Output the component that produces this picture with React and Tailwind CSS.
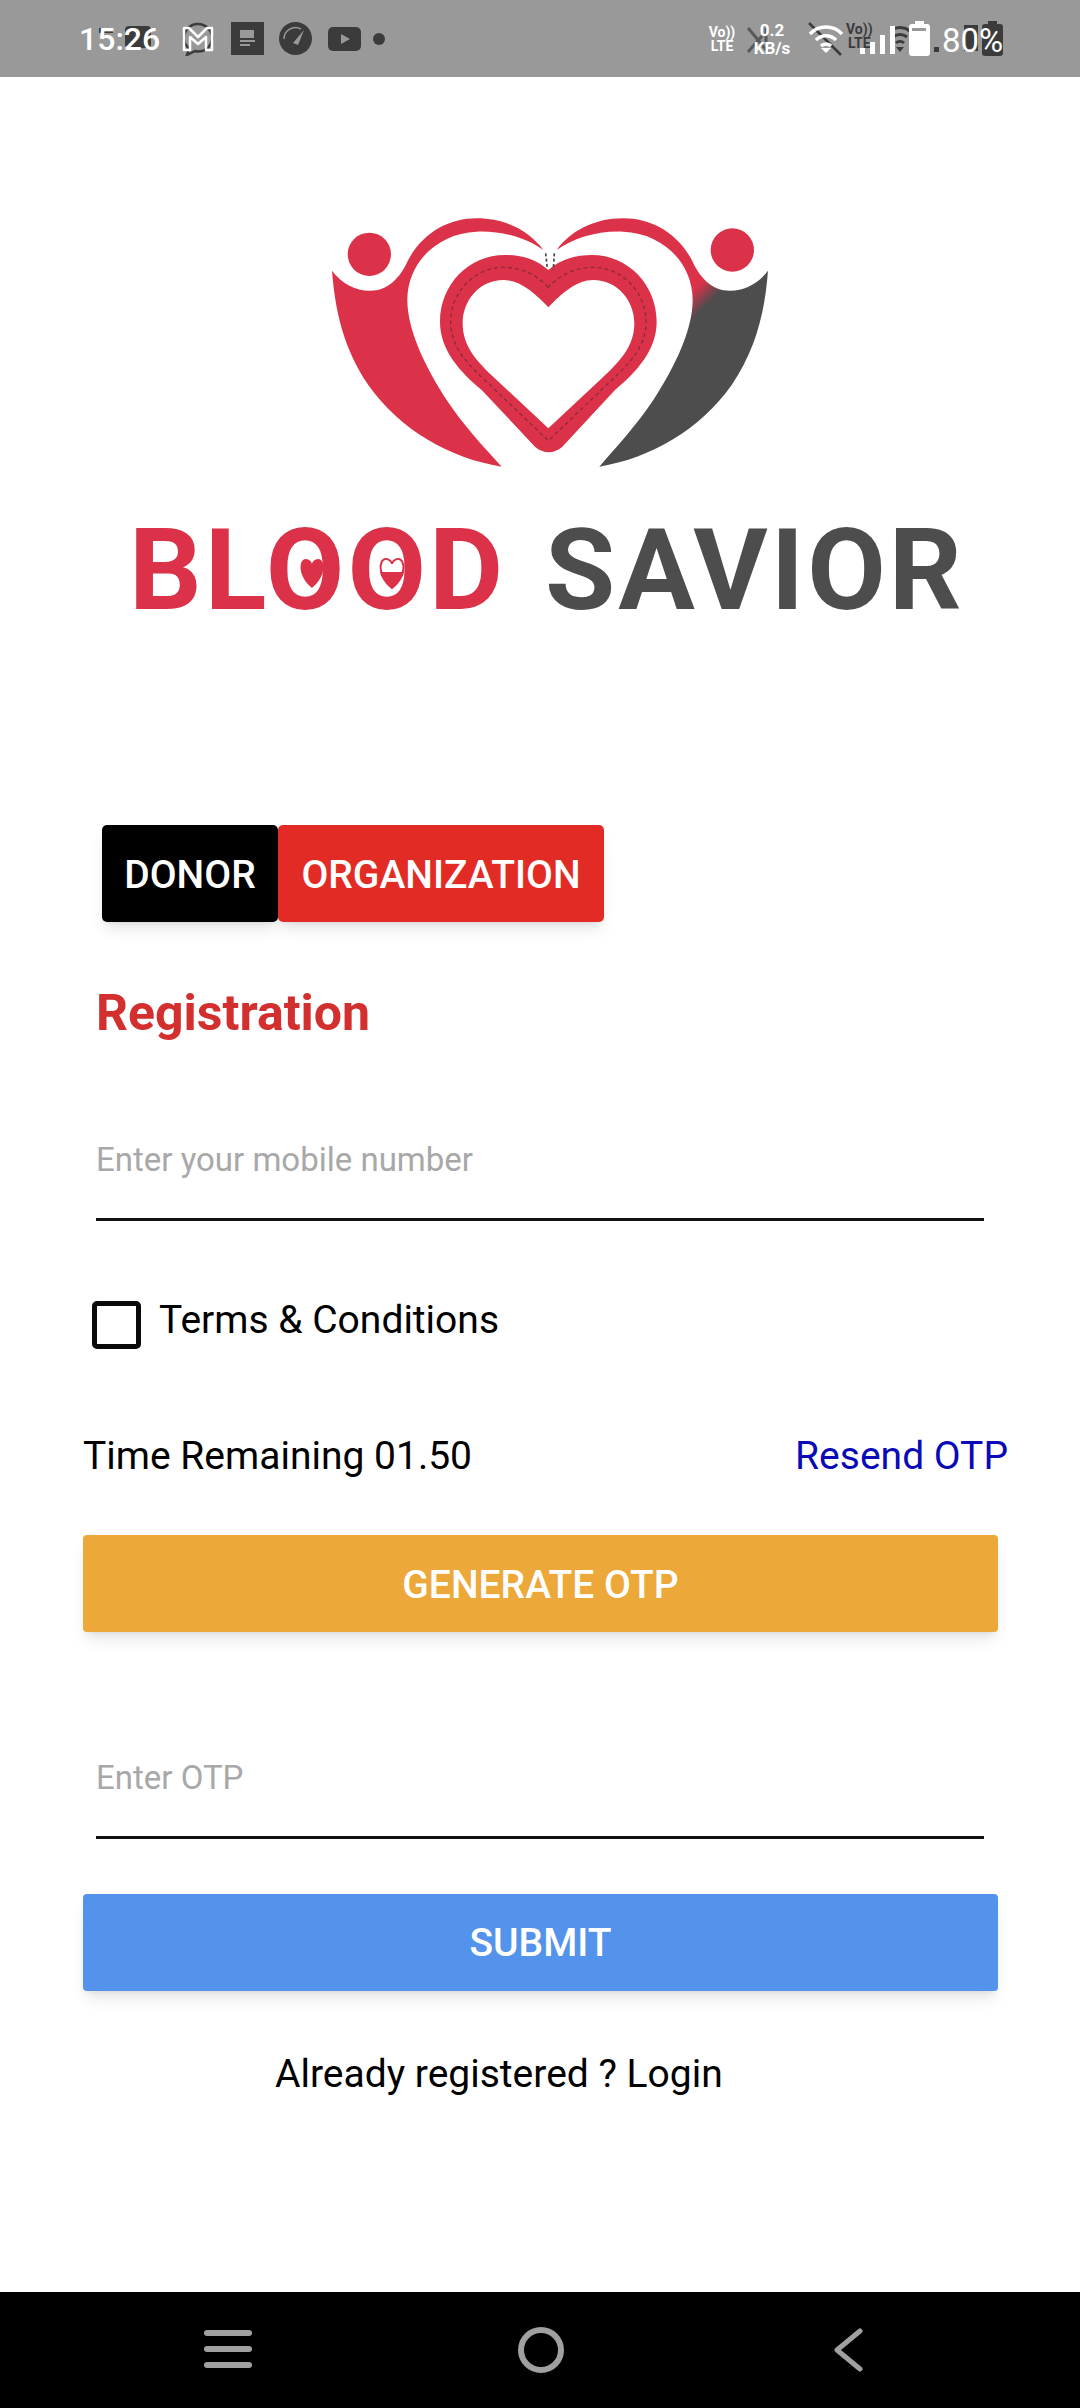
import React from "react";

function Logo() {
  return (
    <div className="relative">
      <svg viewBox="300 190 500 290" width="500" height="290" className="block ml-[300px]">
        <defs>
          <linearGradient id="rg" gradientUnits="userSpaceOnUse" x1="1185" y1="295" x2="1228" y2="338">
            <stop offset="0" stopColor="#dc3249" />
            <stop offset="1" stopColor="#4d4d4d" />
          </linearGradient>
        </defs>
        <g transform="translate(300 190) scale(0.33333)">
          <circle cx="208" cy="193" r="65" fill="#dc3249" />
          <circle cx="1297" cy="180" r="65" fill="#dc3249" />
          <path
            fill="#dc3249"
            d="M96 242C125 280 165 302 210 302C265 302 300 262 322 215C365 130 445 85 530 85C620 85 690 125 730 180C680 145 610 122 530 125C410 130 322 220 322 330C322 420 375 530 440 630C490 705 550 770 605 830C450 805 300 720 205 585C130 475 105 360 96 242Z"
          />
          <path
            fill="url(#rg)"
            d="M1404 242C1375 280 1335 302 1290 302C1235 302 1200 262 1178 215C1135 130 1055 85 970 85C880 85 810 125 770 180C820 145 890 122 970 125C1090 130 1178 220 1178 330C1178 420 1125 530 1060 630C1010 705 950 770 898 830C1050 805 1200 720 1295 585C1370 475 1395 360 1404 242Z"
          />
          <path
            fill="#dc3249"
            fillRule="evenodd"
            d="M745 240C705 205 660 195 615 195C505 195 420 285 420 395C420 480 480 545 545 600L705 770C730 792 762 792 787 770L945 600C1010 545 1070 480 1070 395C1070 285 985 195 875 195C830 195 785 205 745 240ZM745 352C705 310 660 270 610 270C540 270 488 330 488 400C488 470 530 515 590 570L745 715L900 570C960 515 1003 470 1003 400C1003 330 950 270 880 270C830 270 785 310 745 352Z"
          />
          <path
            fill="none"
            stroke="#8f2a3a"
            strokeWidth="4"
            strokeDasharray="12 9"
            d="M745 292C705 250 660 232 612 232C525 232 452 305 452 395C452 470 500 520 565 580L745 752L925 580C990 520 1038 470 1038 395C1038 305 965 232 878 232C830 232 785 250 745 292Z"
          />
          <path fill="none" stroke="#444" strokeWidth="5" strokeDasharray="9 7" d="M737 190L742 235M763 190L760 240" />
        </g>
      </svg>
      <div className="relative mt-[33px] ml-[129px] h-[114px] flex text-[114px] leading-[114px] font-bold whitespace-nowrap">
        <span className="tracking-[3px] text-[#dc3249]">BLOOD</span>
        <span className="absolute left-[416px] tracking-[3px] text-[#4d4d4d]">SAVIOR</span>
        <svg viewBox="0 0 110 40" width="110" height="40" className="absolute left-[166px] top-[42px]">
          <path fill="#dc3249" d="M17 33C3 22 3 4 11 4C14 4 17 7 17 9C17 7 20 4 23 4C31 4 31 22 17 33Z" />
          <path fill="#fff" stroke="#dc3249" strokeWidth="2" d="M97 33C83 22 83 4 91 4C94 4 97 7 97 9C97 7 100 4 103 4C111 4 111 22 97 33Z" />
          <path fill="#dc3249" d="M97 33C89 26 86 22 85 17L109 17C108 22 105 26 97 33Z" />
        </svg>
      </div>
    </div>
  );
}

function StatusBar() {
  return (
    <div className="relative h-[77px] bg-[#999999] flex items-center justify-between pl-[79px] pr-[77px] font-[Roboto] text-white">
      <div className="flex items-center">
        <div className="relative w-[82px] h-[38px] flex items-center">
          <div className="absolute left-[20px] top-[8px] w-[14px] h-[5px] bg-[#3b3b3b]" />
          <div className="absolute left-[46px] top-[6px] w-[26px] h-[22px] bg-[#3b3b3b] rounded-[4px]" />
          <span className="relative text-[32px] leading-[38px] font-medium text-white">15:26</span>
        </div>
        <svg viewBox="0 0 34 34" width="34" height="34" className="ml-[20px]">
          <path d="M17 2C9 2 3 8 3 16c0 4 2 8 5 10l-2 7 8-4c1 .3 2 .5 3 .5 8 0 14-6 14-13.500S25 2 17 2Z" fill="none" stroke="#3b3b3b" strokeWidth="2.500" />
          <path d="M3 6h5l9 9 9-9h5v22h-6V15l-8 7-8-7v13H3Z" fill="none" stroke="#fff" strokeWidth="2.500" strokeLinejoin="round" />
        </svg>
        <svg viewBox="0 0 33 33" width="33" height="33" className="ml-[16px]">
          <rect width="33" height="33" fill="#3b3b3b" />
          <rect x="9" y="8" width="14" height="8" fill="#999999" />
          <rect x="9" y="18" width="15" height="2" fill="#999999" />
          <rect x="9" y="22" width="10" height="2" fill="#999999" />
        </svg>
        <svg viewBox="0 0 33 33" width="33" height="33" className="ml-[15px]">
          <circle cx="16.500" cy="16.500" r="16.500" fill="#3b3b3b" />
          <path d="M5 17a11.500 11.500 0 0 1 17-10" fill="none" stroke="#999999" strokeWidth="1.500" />
          <path d="M14 21L25 8 19 23Z" fill="#999999" />
        </svg>
        <svg viewBox="0 0 33 24" width="33" height="24" className="ml-[16px]">
          <rect width="33" height="24" rx="5" fill="#3b3b3b" />
          <path d="M13 7l9 5-9 5Z" fill="#999999" />
        </svg>
        <div className="ml-[12px] w-[12px] h-[12px] rounded-full bg-[#3b3b3b]" />
      </div>
      <div className="flex items-center">
        <div className="w-[28px] flex flex-col items-center text-[14px] leading-[14px] font-bold">
          <span>Vo))</span>
          <span>LTE</span>
        </div>
        <div className="relative w-[44px] ml-[14px] flex flex-col items-center text-[17px] leading-[18px] font-bold">
          <svg viewBox="0 0 30 30" width="30" height="30" className="absolute left-[-4px] top-[4px]">
            <path d="M2 3l20 24M2 27l14-16M20 3v14" stroke="#5a5a5a" strokeWidth="3" fill="none" />
          </svg>
          <span className="relative">0.2</span>
          <span className="relative">KB/s</span>
        </div>
        <svg viewBox="0 0 36 34" width="36" height="34" className="ml-[14px]">
          <path d="M1 1l32 32" stroke="#3b3b3b" strokeWidth="2.500" />
          <path d="M2 12a22 22 0 0 1 32 0M8 18a14 14 0 0 1 20 0M13 24a7 7 0 0 1 10 0" stroke="#fff" strokeWidth="3.500" fill="none" />
          <path d="M18 31l-5-5h10Z" fill="#fff" />
        </svg>
        <div className="relative ml-[2px] w-[38px] h-[34px]">
          <div className="absolute left-0 top-0 flex flex-col items-center text-[14px] leading-[14px] font-bold text-[#3b3b3b]">
            <span>Vo))</span>
            <span>LTE</span>
          </div>
          <div className="absolute left-[14px] bottom-[2px] flex items-end gap-[5px]">
            <div className="w-[5px] h-[6px] bg-white" />
            <div className="w-[5px] h-[12px] bg-white" />
            <div className="w-[5px] h-[19px] bg-white" />
            <div className="w-[5px] h-[28px] bg-white" />
          </div>
        </div>
        <svg viewBox="0 0 20 30" width="20" height="30" className="ml-[6px]">
          <path d="M0 7a16 16 0 0 1 20 0M3 13a11 11 0 0 1 14 0M6 19a6 6 0 0 1 8 0" stroke="#3b3b3b" strokeWidth="3" fill="none" />
          <path d="M10 28l-4-5h8Z" fill="#3b3b3b" />
        </svg>
        <svg viewBox="0 0 21 35" width="21" height="35" className="ml-[-1px]">
          <rect x="6" width="9" height="4" fill="#fff" />
          <rect y="3" width="21" height="32" rx="3" fill="#fff" />
          <rect x="3" y="7" width="14" height="3" fill="#999999" />
        </svg>
        <div className="relative ml-[12px] w-[61px] h-[35px] flex items-center">
          <div className="absolute left-[-8px] bottom-[4px] w-[5px] h-[5px] bg-[#3b3b3b]" />
          <div className="absolute left-[22px] top-[4px] w-[14px] h-[26px] bg-[#3b3b3b]" />
          <svg viewBox="0 0 21 35" width="21" height="35" className="absolute right-0 top-0">
            <rect x="6" width="9" height="4" fill="#3b3b3b" />
            <rect y="3" width="21" height="32" rx="3" fill="#3b3b3b" />
          </svg>
          <span className="relative text-[33px] leading-[35px] font-normal mt-[3px]">80%</span>
        </div>
      </div>
    </div>
  );
}

function Underlined({ placeholder, mt }) {
  return (
    <div className={`mx-[96px] h-[100px] pb-[20px] border-b-[3px] border-[#111111] flex items-center text-[33px] text-[#a8a8a8] ${mt}`}>
      {placeholder}
    </div>
  );
}

export default function App() {
  return (
    <div className="w-[1080px] h-[2408px] bg-white flex flex-col font-[Roboto] overflow-hidden">
      <StatusBar />
      <div className="mt-[113px]">
        <Logo />
      </div>
      <div className="mt-[198px] ml-[102px] flex h-[97px] text-[39px] font-medium text-white">
        <div className="w-[176px] pt-[3px] bg-black rounded-[5px] flex items-center justify-center shadow-lg">DONOR</div>
        <div className="w-[326px] pt-[3px] bg-[#e22b24] rounded-[5px] flex items-center justify-center shadow-lg">ORGANIZATION</div>
      </div>
      <div className="mt-[61px] ml-[96px] h-[60px] flex items-center text-[50px] font-bold text-[#d32f2f]">Registration</div>
      <Underlined placeholder="Enter your mobile number" mt="mt-[78px]" />
      <div className="mt-[80px] ml-[92px] flex items-start">
        <div className="w-[49px] h-[48px] border-[5px] border-[#0a0a0a] rounded-[5px]" />
        <span className="ml-[18px] mt-[-4px] text-[39px] leading-[46px] text-black">Terms &amp; Conditions</span>
      </div>
      <div className="mt-[84px] ml-[83px] mr-[72px] flex items-center justify-between text-[39px] leading-[46px]">
        <span className="text-black">Time Remaining 01.50</span>
        <span className="text-[#0a0ab8]">Resend OTP</span>
      </div>
      <div className="mt-[56px] mx-[83px] w-[915px] h-[97px] pt-[3px] bg-[#eca838] rounded-[4px] flex items-center justify-center text-[39px] font-medium text-white shadow-lg">GENERATE OTP</div>
      <Underlined placeholder="Enter OTP" mt="mt-[107px]" />
      <div className="mt-[55px] mx-[83px] w-[915px] h-[97px] pt-[2px] bg-[#5393eb] rounded-[4px] flex items-center justify-center text-[39px] font-medium text-white shadow-lg">SUBMIT</div>
      <div className="mt-[60px] ml-[275px] text-[39px] leading-[46px] text-black">Already registered ? Login</div>
      <div className="mt-auto h-[116px] bg-black flex items-center">
        <div className="ml-[204px] w-[48px] flex flex-col gap-[10px] mt-[-3px]">
          <div className="h-[6px] rounded-full bg-[#a0a0a0]" />
          <div className="h-[6px] rounded-full bg-[#a0a0a0]" />
          <div className="h-[6px] rounded-full bg-[#a0a0a0]" />
        </div>
        <div className="ml-[266px] w-[46px] h-[46px] rounded-full border-[6px] border-[#a0a0a0] mt-[-1px]" />
        <svg viewBox="0 0 30 44" width="30" height="44" className="ml-[269px] mt-[-1px]">
          <path d="M27 3L4 22l23 19" fill="none" stroke="#a0a0a0" strokeWidth="5" strokeLinecap="round" strokeLinejoin="round" />
        </svg>
      </div>
    </div>
  );
}
